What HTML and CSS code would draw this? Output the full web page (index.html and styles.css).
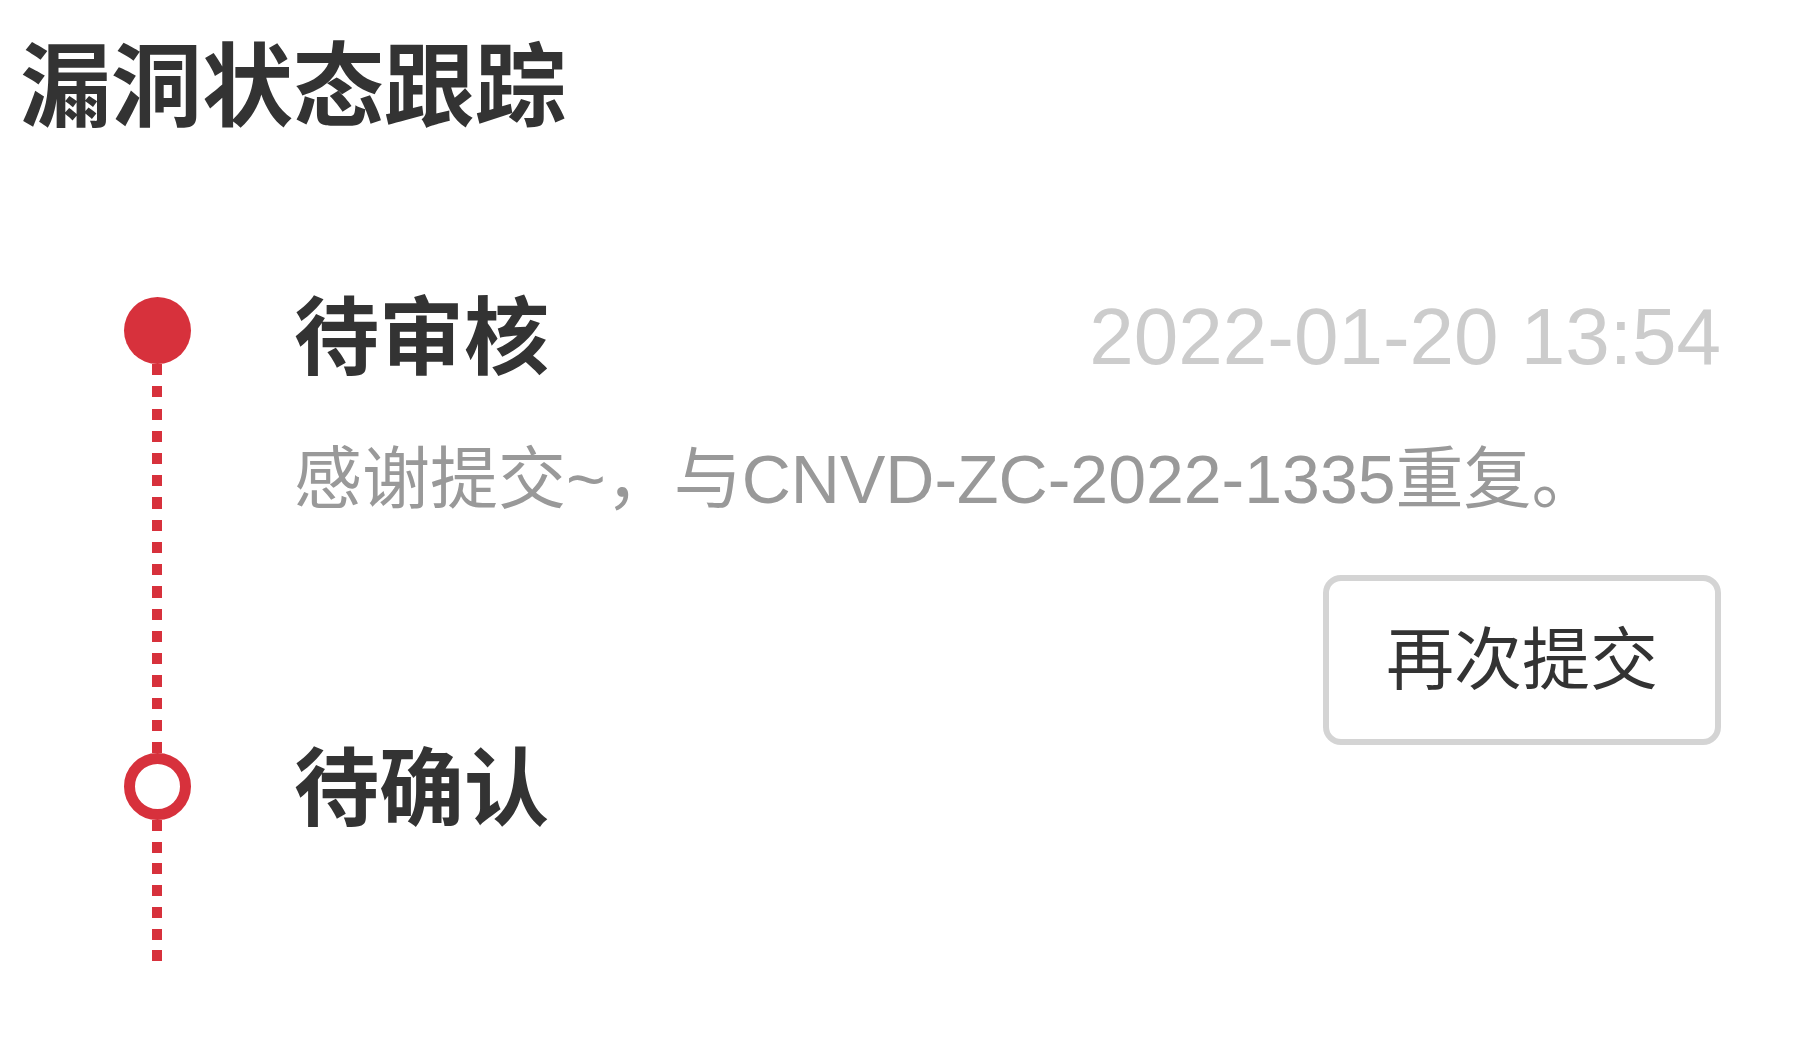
FILE: index.html
```html
<!DOCTYPE html>
<html lang="zh-CN">
<head>
<meta charset="utf-8">
<title>漏洞状态跟踪</title>
<link rel="stylesheet" href="styles.css">
</head>
<body>
<div class="page">
  <h1 class="title">漏洞状态跟踪</h1>
  <ol class="timeline">
    <li class="step">
      <div class="rail"><span class="node node-filled"></span><span class="tail"></span></div>
      <div class="step-body">
        <div class="step-head">
          <h2 class="step-name">待审核</h2>
          <time class="step-time">2022-01-20 13:54</time>
        </div>
        <p class="step-desc">感谢提交~，与CNVD-ZC-2022-1335重复。</p>
        <div class="step-actions"><button class="btn-outline" type="button">再次提交</button></div>
      </div>
    </li>
    <li class="step">
      <div class="rail"><span class="node node-hollow"></span><span class="tail tail-end"></span></div>
      <div class="step-body">
        <div class="step-head step-head-last">
          <h2 class="step-name">待确认</h2>
        </div>
      </div>
    </li>
  </ol>
</div>
</body>
</html>
```

FILE: styles.css
```css
html, body {
  margin: 0;
  background: #ffffff;
}

body {
  font-family: "Liberation Sans", "Noto Sans CJK SC", sans-serif;
  color: #333333;
}

.page {
  padding: 42px 87px 0 20px;
}

.title {
  margin: 0;
  font-size: 91px;
  line-height: 92px;
  font-weight: 700;
  color: #333333;
}

.timeline {
  list-style: none;
  margin: 163px 0 0;
  padding: 0;
}

.step {
  display: flex;
}

.rail {
  flex: none;
  width: 274px;
  display: flex;
  flex-direction: column;
  align-items: center;
}

.node {
  flex: none;
  width: 67px;
  height: 67px;
  box-sizing: border-box;
  border-radius: 50%;
}

.node-filled {
  background: #d7313c;
}

.node-hollow {
  background: #ffffff;
  border: 11px solid #d7313c;
}

.tail {
  flex: 1;
  width: 10px;
  background: repeating-linear-gradient(to bottom, #d7313c 0 11px, transparent 11px 22.25px);
}

.tail-end {
  flex: none;
  height: 141px;
  background: repeating-linear-gradient(to bottom, #d7313c 0 11px, transparent 11px 21.7px);
}

.step-body {
  flex: 1;
  min-width: 0;
  padding-bottom: 8px;
}

.step-head {
  display: flex;
  justify-content: space-between;
  align-items: flex-start;
}

.step-head-last {
  margin-top: -5px;
}

.step-name {
  margin: 0;
  font-size: 85px;
  line-height: 84px;
  font-weight: 700;
  color: #333333;
}

.step-time {
  font-size: 80px;
  line-height: 80px;
  color: #cccccc;
}

.step-desc {
  margin: 64px 0 0;
  font-size: 68px;
  line-height: 68px;
  color: #999999;
}

.step-actions {
  display: flex;
  justify-content: flex-end;
  margin-top: 62px;
}

.btn-outline {
  width: 398px;
  height: 170px;
  box-sizing: border-box;
  padding: 0;
  border: 6px solid #d4d4d4;
  border-radius: 18px;
  background: #ffffff;
  font-family: inherit;
  font-size: 68px;
  line-height: 1;
  color: #333333;
  cursor: pointer;
}
```
